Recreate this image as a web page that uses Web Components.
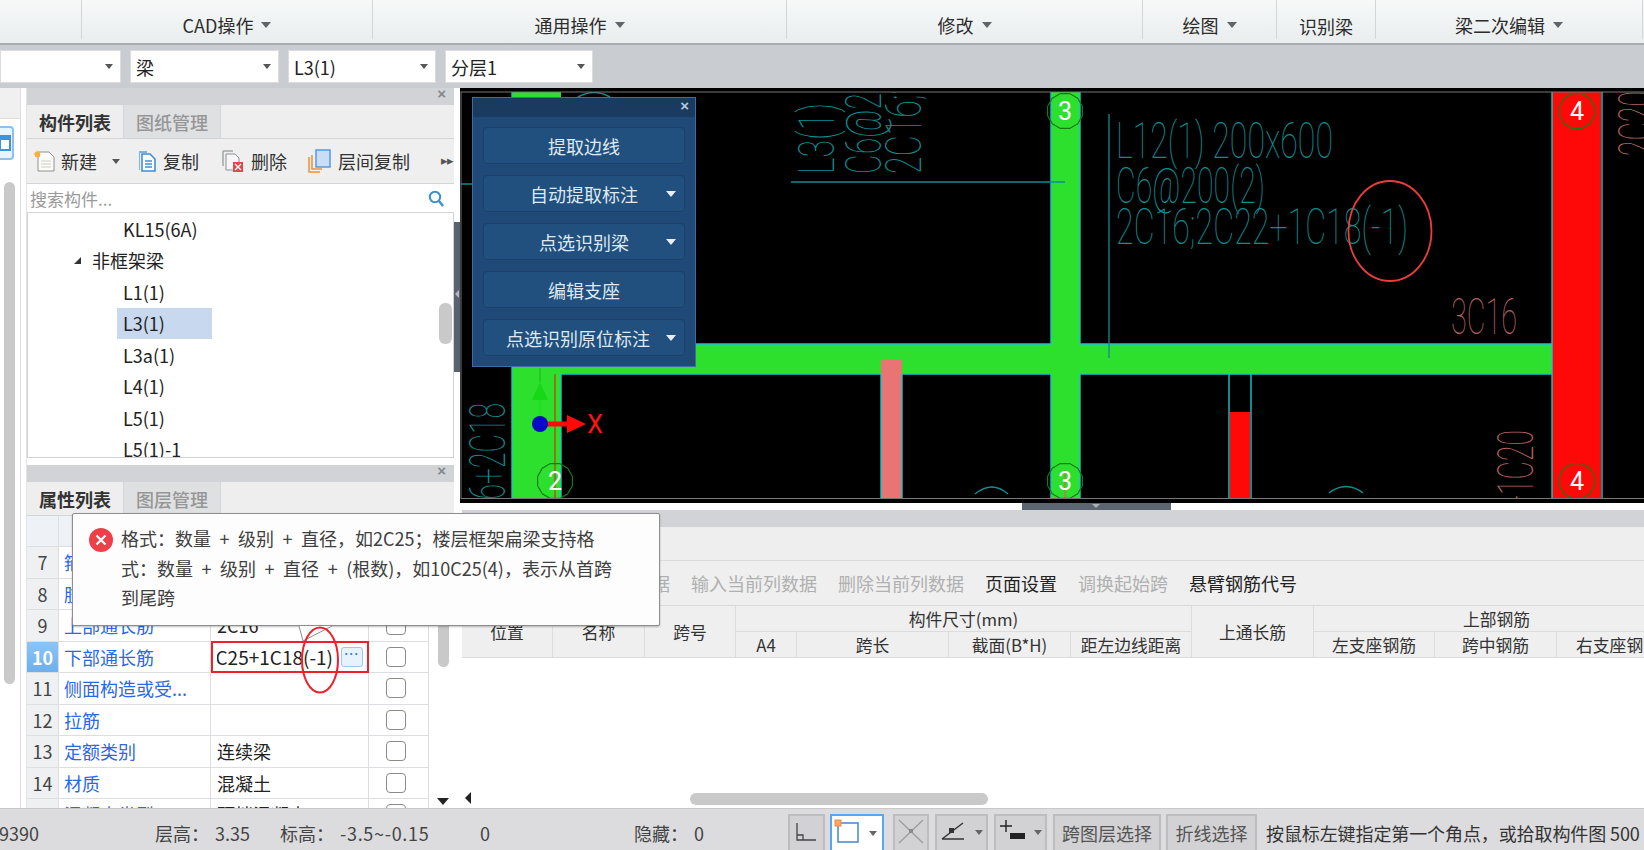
<!DOCTYPE html>
<html lang="zh">
<head>
<meta charset="utf-8">
<title>梁二次编辑</title>
<style>
  html, body { margin:0; height:100%; background:#fff; }
  body { font-family:"Noto Sans CJK SC","Noto Sans",sans-serif; font-size:18px; color:#333; overflow:hidden; }
</style>
</head>
<body>
<gl-app>
  <gl-ribbon>
    <gl-ribbon-group style="width:82px"></gl-ribbon-group>
    <gl-ribbon-group style="width:291px" arrow>CAD操作</gl-ribbon-group>
    <gl-ribbon-group style="width:414px" arrow>通用操作</gl-ribbon-group>
    <gl-ribbon-group style="width:356px" arrow>修改</gl-ribbon-group>
    <gl-ribbon-group style="width:134px" arrow>绘图</gl-ribbon-group>
    <gl-ribbon-group style="width:99px;--drop:2px">识别梁</gl-ribbon-group>
    <gl-ribbon-group style="width:267px" arrow>梁二次编辑</gl-ribbon-group>
  </gl-ribbon>

  <gl-select-bar>
    <gl-combo style="width:121px"></gl-combo>
    <gl-combo style="width:149px">梁</gl-combo>
    <gl-combo style="width:148px">L3(1)</gl-combo>
    <gl-combo style="width:148px">分层1</gl-combo>
  </gl-select-bar>

  <gl-workspace>
    <gl-side-strip></gl-side-strip>
    <gl-left-column>
      <gl-dock-panel style="height:370px" tab1="构件列表" tab2="图纸管理">
        <gl-list-tools></gl-list-tools>
        <gl-search-box></gl-search-box>
        <gl-tree>
          <gl-tree-row>KL15(6A)</gl-tree-row>
          <gl-tree-row group>非框架梁</gl-tree-row>
          <gl-tree-row>L1(1)</gl-tree-row>
          <gl-tree-row selected>L3(1)</gl-tree-row>
          <gl-tree-row>L3a(1)</gl-tree-row>
          <gl-tree-row>L4(1)</gl-tree-row>
          <gl-tree-row>L5(1)</gl-tree-row>
          <gl-tree-row>L5(1)-1</gl-tree-row>
        </gl-tree>
      </gl-dock-panel>
      <gl-dock-panel style="height:343px" tab1="属性列表" tab2="图层管理">
        <gl-prop-table>
          <gl-prop-row num="7" name="箍筋"></gl-prop-row>
          <gl-prop-row num="8" name="肢数"></gl-prop-row>
          <gl-prop-row num="9" name="上部通长筋" value="2C16"></gl-prop-row>
          <gl-prop-row num="10" name="下部通长筋" value="2C25+1C18(-1)" active></gl-prop-row>
          <gl-prop-row num="11" name="侧面构造或受..."></gl-prop-row>
          <gl-prop-row num="12" name="拉筋"></gl-prop-row>
          <gl-prop-row num="13" name="定额类别" value="连续梁"></gl-prop-row>
          <gl-prop-row num="14" name="材质" value="混凝土"></gl-prop-row>
          <gl-prop-row num="15" name="混凝土类型" value="预拌混凝土"></gl-prop-row>
        </gl-prop-table>
      </gl-dock-panel>
    </gl-left-column>
    <gl-gutter></gl-gutter>
    <gl-right-column>
      <gl-cad-canvas>
        <gl-float-panel>
          <gl-float-btn>提取边线</gl-float-btn>
          <gl-float-btn arrow>自动提取标注</gl-float-btn>
          <gl-float-btn arrow>点选识别梁</gl-float-btn>
          <gl-float-btn>编辑支座</gl-float-btn>
          <gl-float-btn arrow style="--pad-right:12px">点选识别原位标注</gl-float-btn>
        </gl-float-panel>
      </gl-cad-canvas>
      <gl-splitter></gl-splitter>
      <gl-span-panel></gl-span-panel>
    </gl-right-column>
  </gl-workspace>

  <gl-status-bar></gl-status-bar>

  <gl-error-tip>格式：数量 + 级别 + 直径，如2C25；楼层框架扁梁支持格<br>式：数量 + 级别 + 直径 + (根数)，如10C25(4)，表示从首跨<br>到尾跨</gl-error-tip>
  <gl-ring></gl-ring>
</gl-app>

<script>
/* small base class: sets the shadow root from the css() and html() of the subclass */
class GlElement extends HTMLElement {
  constructor() {
    super();
    this.attachShadow({ mode: "open" });
  }
  connectedCallback() {
    this.shadowRoot.innerHTML = `<style>${this.css()}</style>${this.html()}`;
  }
  css() { return ""; }
  html() { return "<slot></slot>"; }
}
const define = (name, cls) => customElements.define(name, cls);

define("gl-app", class extends GlElement {
  css() { return `:host { display:flex; flex-direction:column; position:relative; width:1644px; height:850px; overflow:hidden; }`; }
});

define("gl-ribbon", class extends GlElement {
  css() { return `:host { display:flex; height:43px; flex:none; background:linear-gradient(#f7f9f9,#e9eded); border-bottom:2px solid #a9abae; }`; }
});

define("gl-ribbon-group", class extends GlElement {
  css() {
    return `
      :host { display:block; flex:none; height:39px; box-sizing:border-box; border-right:1px solid #d2d6d6; font-size:18px; color:#2c2c2c; }
      .label { display:flex; align-items:center; justify-content:center; gap:8px; height:50px; padding-top:var(--drop,0); box-sizing:border-box; white-space:nowrap; }
      .arrow { width:0; height:0; border:5px solid transparent; border-top:6px solid #606468; border-bottom:0; }
    `;
  }
  html() {
    return `<div class="label"><slot></slot>${this.hasAttribute("arrow") ? '<i class="arrow"></i>' : ""}</div>`;
  }
});

define("gl-select-bar", class extends GlElement {
  css() { return `:host { display:flex; gap:9px; flex:none; height:43px; padding-top:5px; box-sizing:border-box; background:#c9ccd1; align-items:flex-start; }`; }
});

define("gl-combo", class extends GlElement {
  css() {
    return `
      :host { display:flex; align-items:center; flex:none; height:33px; box-sizing:border-box; padding-left:5px; background:#fff; border:1px solid #dcdcdc; position:relative; font-size:18px; color:#222; }
      .arrow { position:absolute; right:7px; top:13px; width:0; height:0; border:4px solid transparent; border-top:5px solid #555; border-bottom:0; }
    `;
  }
  html() { return `<slot></slot><i class="arrow"></i>`; }
});

define("gl-workspace", class extends GlElement {
  css() { return `:host { display:flex; flex:none; height:720px; background:#fff; }`; }
});

define("gl-side-strip", class extends GlElement {
  css() {
    return `
      :host { display:flex; flex-direction:column; flex:none; width:27px; box-sizing:border-box; border-right:1px solid #e4e4e4; position:relative; }
      .top { height:30px; width:20px; background:#f0f0f0; border-bottom:1px solid #ddd; }
      .btn { width:14px; height:34px; margin-top:7px; box-sizing:border-box; border:2px solid #8cc0f0; border-left:0; border-radius:0 4px 4px 0; background:#eaf4fd; display:flex; align-items:center; }
      .rail { position:absolute; left:20px; top:0; bottom:0; width:1px; background:#dedede; }
      .thumb { width:11px; height:502px; margin:22px 0 0 4px; background:#c9c9c9; border-radius:6px; }
    `;
  }
  html() {
    return `<div class="top"></div>
      <div class="btn"><svg width="12" height="16" viewBox="0 0 12 16"><rect x="0" y="1" width="10" height="14" fill="#fff" stroke="#3a94e0" stroke-width="2"/><rect x="0" y="1" width="10" height="4" fill="#3a94e0"/></svg></div>
      <div class="thumb"></div><div class="rail"></div>`;
  }
});

define("gl-left-column", class extends GlElement {
  css() { return `:host { display:flex; flex-direction:column; gap:7px; flex:none; width:427px; }`; }
});

define("gl-dock-panel", class extends GlElement {
  css() {
    return `
      :host { display:flex; flex-direction:column; flex:none; box-sizing:border-box; overflow:hidden; }
      .title { flex:none; height:17px; background:#d1d3d7; position:relative; }
      .close { position:absolute; right:8px; top:-5px; font:bold 15px/22px "Liberation Sans",sans-serif; color:#85888c; }
      .tabs { display:flex; flex:none; height:33px; background:#eeeeee; border-bottom:1px solid #d3d5d8; }
      .tab { width:97px; display:flex; align-items:center; justify-content:center; font-weight:700; font-size:18px; color:#333; border-right:1px solid #d3d5d8; box-sizing:border-box; }
      .tab.off { background:#dfe0e2; color:#969696; font-weight:500; }
      .body { flex:1; display:flex; flex-direction:column; min-height:0; }
    `;
  }
  html() {
    return `<div class="title"><span class="close">×</span></div>
      <div class="tabs"><div class="tab">${this.getAttribute("tab1")}</div><div class="tab off">${this.getAttribute("tab2")}</div></div>
      <div class="body"><slot></slot></div>`;
  }
});

define("gl-list-tools", class extends GlElement {
  css() {
    return `
      :host { display:flex; align-items:center; flex:none; height:45px; box-sizing:border-box; padding-left:6px; background:#efefef; border-bottom:1px solid #d3d5d8; font-size:18px; color:#333; position:relative; }
      .item { display:flex; align-items:center; gap:6px; flex:none; }
      .arrow { width:0; height:0; border:4px solid transparent; border-top:5px solid #555; border-bottom:0; margin-left:9px; }
      .more { position:absolute; left:414px; top:11px; color:#555; font-size:13px; letter-spacing:-1px; }
    `;
  }
  html() {
    return `
      <div class="item" style="width:104px">
        <svg width="22" height="22" viewBox="0 0 22 22"><path d="M5 2h11l5 5v14H5z" fill="#fbfbf8" stroke="#8f9490"/><path d="M8 11h10M8 14h10M8 17h10" stroke="#cfcfc8"/><path d="M4 0l1 3 3 1-3 1-1 3-1-3-3-1 3-1z" fill="#f4a030"/><rect x="2" y="2" width="5" height="5" fill="#f7b040"/></svg>
        新建<i class="arrow"></i>
      </div>
      <div class="item" style="width:85px">
        <svg width="20" height="22" viewBox="0 0 20 22"><path d="M2 1h8v2H3v17H2z" fill="#7fb2e4"/><path d="M5 4h8l5 5v12H5z" fill="#fff" stroke="#3f8ed8" stroke-width="1.6"/><path d="M8 11h7M8 14h7M8 17h7" stroke="#3f8ed8" stroke-width="1.4"/></svg>
        复制
      </div>
      <div class="item" style="width:86px;gap:7px">
        <svg width="22" height="22" viewBox="0 0 22 22"><path d="M1 1h10M1 1v15" stroke="#a3a6a8" stroke-width="1.5" fill="none"/><path d="M4 4h9l4 4v12H4z" fill="#f6f6f6" stroke="#8c8f91"/><rect x="11" y="12" width="10" height="10" fill="#e0454a"/><path d="M13 14l6 6M19 14l-6 6" stroke="#fff" stroke-width="1.4"/></svg>
        删除
      </div>
      <div class="item" style="gap:7px">
        <svg width="23" height="24" viewBox="0 0 23 24"><path d="M1 8v15h11M4 6v14h10" fill="none" stroke="#ef9440" stroke-width="1.6"/><rect x="8" y="1" width="14" height="17" fill="#c9def6" stroke="#4a96e0" stroke-width="1.4"/></svg>
        层间复制
      </div>
      <span class="more">▸▸</span>`;
  }
});

define("gl-search-box", class extends GlElement {
  css() {
    return `
      :host { display:flex; align-items:center; justify-content:space-between; flex:none; height:29px; box-sizing:border-box; padding:0 10px 0 3px; background:#fff; border-bottom:1px solid #d3d5d8; color:#9a9a9a; font-size:17px; }
    `;
  }
  html() {
    return `<span>搜索构件...</span>
      <svg width="16" height="17" viewBox="0 0 16 17"><circle cx="7" cy="7" r="5.2" fill="none" stroke="#3b90d4" stroke-width="2"/><path d="M11 11l4 5" stroke="#3b90d4" stroke-width="2.4"/></svg>`;
  }
});

define("gl-tree", class extends GlElement {
  css() {
    return `
      :host { display:block; flex:1; min-height:0; box-sizing:border-box; border:1px solid #cfd2d6; border-top:0; position:relative; overflow:hidden; background:#fff; }
      .thumb { position:absolute; left:411px; top:90px; width:13px; height:41px; background:#c9c9c9; border-radius:6px; }
    `;
  }
  html() { return `<slot></slot><div class="thumb"></div>`; }
});

define("gl-tree-row", class extends GlElement {
  css() {
    const group = this.hasAttribute("group");
    const selected = this.hasAttribute("selected");
    return `
      :host { display:flex; align-items:center; height:31.5px; position:relative; padding-left:${group ? 64 : 89}px; color:#222; }
      .text { ${group ? "" : "width:95px; padding-left:6px; box-sizing:border-box;"} height:100%; display:flex; align-items:center; font-size:18px; white-space:nowrap; ${selected ? "background:#c8d8ee;" : ""} }
      .fold { position:absolute; left:46px; top:12px; width:0; height:0; border-left:7px solid transparent; border-bottom:7px solid #333; }
    `;
  }
  html() {
    return `${this.hasAttribute("group") ? '<i class="fold"></i>' : ""}<div class="text"><slot></slot></div>`;
  }
});

define("gl-prop-table", class extends GlElement {
  css() {
    return `
      :host { display:block; flex:1; min-height:0; position:relative; overflow:hidden; background:#fff; }
      .head { display:grid; grid-template-columns:32px 152px 158px 60px; height:31px; background:#eef1f6; }
      .head div { border-right:1px solid #dcdee2; border-bottom:1px solid #dcdee2; }
      .rows { width:402px; }
      .thumb { position:absolute; left:411px; top:48px; width:11px; height:103px; border-radius:6px; background:#c9c9c9; }
      .down { position:absolute; left:410px; top:282px; width:0; height:0; border:6px solid transparent; border-top:7px solid #222; border-bottom:0; }
    `;
  }
  html() {
    return `<div class="head"><div></div><div></div><div></div><div></div></div>
      <div class="rows"><slot></slot></div>
      <div class="thumb"></div><i class="down"></i>`;
  }
});

define("gl-prop-row", class extends GlElement {
  css() {
    return `
      :host { display:grid; grid-template-columns:32px 152px 158px 60px; height:31.5px; font-size:18px; position:relative; }
      .cell { display:flex; align-items:center; box-sizing:border-box; border-right:1px solid #dcdee2; border-bottom:1px solid #dcdee2; white-space:nowrap; overflow:hidden; }
      .num { justify-content:center; background:#eef0f2; color:#444; }
      .num.on { background:linear-gradient(#8cc4f6,#6cb0ee); color:#fff; font-weight:700; }
      .name { padding-left:5px; color:#2a68e6; }
      .value { padding-left:6px; color:#222; }
      .box { width:20px; height:20px; margin-left:17px; box-sizing:border-box; border:1.5px solid #8a8a8a; border-radius:4px; background:#fff; }
      .check { padding:0; }
      .editor { position:absolute; left:184px; top:-1px; width:158px; height:32px; box-sizing:border-box; border:2px solid #f0202a; display:flex; align-items:center; background:#fff; }
      .clip { flex:none; width:116px; margin-left:4px; display:flex; justify-content:flex-end; overflow:hidden; white-space:nowrap; font-size:19px; color:#222; }
      .dots { flex:none; width:22px; height:20px; margin-left:8px; box-sizing:border-box; border:1.5px solid #9cc8f0; border-radius:3px; background:#e6f2fc; color:#2f7fd0; font:bold 12px/12px "Liberation Sans",sans-serif; text-align:center; letter-spacing:1px; }
    `;
  }
  html() {
    const active = this.hasAttribute("active");
    const value = this.getAttribute("value") || "";
    return `
      <div class="cell num ${active ? "on" : ""}">${this.getAttribute("num")}</div>
      <div class="cell name">${this.getAttribute("name")}</div>
      <div class="cell value">${active ? "" : value}</div>
      <div class="cell check"><div class="box"></div></div>
      ${active ? `<div class="editor"><div class="clip"><span style="flex:none">${value}</span></div><div class="dots">···</div></div>` : ""}`;
  }
});

define("gl-gutter", class extends GlElement {
  css() {
    return `
      :host { display:block; flex:none; width:6px; background:#fff; position:relative; }
      .grip { margin-top:134px; height:150px; background:#586270; position:relative; }
      .grip i { position:absolute; left:1px; top:68px; width:0; height:0; border:4px solid transparent; border-right:4px solid #b5bac0; border-left:0; }
    `;
  }
  html() { return `<div class="grip"><i></i></div>`; }
});

define("gl-right-column", class extends GlElement {
  css() { return `:host { display:flex; flex-direction:column; flex:none; width:1184px; }`; }
});

/* CAD drawing: free canvas, everything is placed by its drawing coordinates */
const TEAL = "#0f8c90", SALMON = "#b5625e";
function stickText(text, x, y, len, cap, color, rotated) {
  const size = (cap / 0.711).toFixed(1);
  const tf = rotated ? `transform="translate(${x} ${y}) rotate(-90)"` : `x="${x}" y="${y}"`;
  return `<text ${tf} textLength="${len}" lengthAdjust="spacingAndGlyphs" font-family="Roboto" font-weight="100" font-size="${size}" fill="${color}">${text}</text>`;
}
function marker(label, cx, cy) {
  const pts = [];
  for (let i = 0; i < 12; i++) {
    const a = (i + 0.5) * Math.PI / 6;
    pts.push(`${(cx + 18 * Math.cos(a)).toFixed(1)},${(cy + 18 * Math.sin(a)).toFixed(1)}`);
  }
  return `<polygon points="${pts.join(" ")}" fill="none" stroke="#157a15" stroke-width="1.2"/>
    <text x="${cx}" y="${cy + 9}" text-anchor="middle" font-family="Roboto" font-size="25" fill="#fff">${label}</text>`;
}

define("gl-cad-canvas", class extends GlElement {
  css() {
    return `
      :host { display:block; flex:none; height:415px; background:#000; position:relative; overflow:hidden; }
      svg { display:block; }
    `;
  }
  html() {
    return `
    <svg width="1184" height="415" viewBox="460 88 1184 415">
      <defs><clipPath id="frame"><rect x="461" y="92" width="1183" height="406"/></clipPath></defs>
      <g clip-path="url(#frame)">
        <rect x="512" y="92" width="49" height="406" fill="#2de02d"/>
        <rect x="561" y="344" width="991" height="30" fill="#2de02d"/>
        <rect x="1051" y="92" width="29" height="406" fill="#2de02d"/>
        <rect x="1552" y="92" width="49" height="406" fill="#ff0808"/>
        <rect x="881" y="359" width="21" height="139" fill="#e87474"/>
        <rect x="1230" y="412" width="20" height="86" fill="#ff0808"/>
        <g stroke="#19c6c6" stroke-width="1.4" fill="none">
          <path d="M561 344H1051M1080 344H1552M561 374H881M902 374H1051M1080 374H1552"/>
          <path d="M512 92V498M561 374V498M1051 92V344M1080 92V344M1051 374V498M1080 374V498"/>
          <path d="M1552 92V498M1602 92V498M881 374V498M902 374V498M1229 374V498M1251 374V498"/>
        </g>
        <path d="M791 182H1065M1109 114V358M460 184H472" stroke="${TEAL}" stroke-width="1.3" fill="none"/>
        <path d="M975 494Q992 480 1008 494M1329 493Q1346 480 1363 493M578 97Q594 88 610 97" stroke="${TEAL}" stroke-width="1.5" fill="none"/>
        ${stickText("L12(1) 200x600", 1116, 158, 217, 36, TEAL)}
        ${stickText("C6@200(2)", 1116, 203, 149, 35, TEAL)}
        ${stickText("2C16;2C22+1C18(-1)", 1116, 244, 292, 35, TEAL)}
        ${stickText("3C16", 1451, 334, 66, 36, SALMON)}
        ${stickText("L3(1)", 834, 174, 71, 35, TEAL, true)}
        ${stickText("C6@200(2)", 881, 174, 149, 35, TEAL, true)}
        ${stickText("2C16;2C22+1C18(-1)", 921, 174, 292, 35, TEAL, true)}
        ${stickText("2C16+2C18", 505, 549, 146, 36, TEAL, true)}
        ${stickText("+1C20", 1533, 511, 81, 36, SALMON, true)}
        ${stickText("2C20", 1654, 156, 65, 36, SALMON, true)}
        <path d="M555 374V498" stroke="#c2401c" stroke-width="1.3"/>
        <path d="M1065 470V498" stroke="#c27a2a" stroke-width="1.3"/>
        ${marker("2", 555, 481)}
        ${marker("3", 1065, 111)}
        ${marker("3", 1065, 481)}
        ${marker("4", 1577, 111)}
        ${marker("4", 1577, 481)}
        <path d="M540 424V398" stroke="#1fe01f" stroke-width="3"/>
        <path d="M540 382L532 400H548Z" fill="#16d816"/>
        <path d="M540 368V382" stroke="#1bb81b" stroke-width="1"/>
        <path d="M540 424H568" stroke="#ff0a0a" stroke-width="5"/>
        <path d="M567 415L586 424L567 433Z" fill="#ff0a0a"/>
        <circle cx="540" cy="424" r="8" fill="#0808c8"/>
        <text x="595" y="433" text-anchor="middle" font-family="Roboto" font-size="25" fill="#ff1414">X</text>
        <ellipse cx="1390" cy="231" rx="41.5" ry="50" fill="none" stroke="#ee3b3b" stroke-width="1.8"/>
      </g>
      <rect x="461" y="92" width="1190" height="406.5" fill="none" stroke="#777" stroke-width="1"/>
    </svg>
    <slot></slot>`;
  }
});

define("gl-float-panel", class extends GlElement {
  css() {
    return `
      :host { display:block; position:absolute; left:12px; top:9px; width:224px; height:270px; box-sizing:border-box; background:#1f4a78; border:1px solid #3d6ea3; color:#dfe8f0; }
      .bar { height:19px; background:#1a3a5f; position:relative; }
      .bar span { position:absolute; right:6px; top:-3px; font:bold 15px/22px "Liberation Sans",sans-serif; color:#b4c8dc; }
      .list { display:flex; flex-direction:column; gap:11px; padding:10px 10px 0; }
    `;
  }
  html() { return `<div class="bar"><span>×</span></div><div class="list"><slot></slot></div>`; }
});

define("gl-float-btn", class extends GlElement {
  css() {
    return `
      :host { display:flex; align-items:center; justify-content:center; height:37px; box-sizing:border-box; padding-right:var(--pad-right,0); background:#21507f; border:1px solid #1b416a; border-radius:4px; position:relative; font-size:18px; }
      .arrow { position:absolute; right:8px; top:15px; width:0; height:0; border:5px solid transparent; border-top:6px solid #e8eef4; border-bottom:0; }
    `;
  }
  html() { return `<slot></slot>${this.hasAttribute("arrow") ? '<i class="arrow"></i>' : ""}`; }
});

define("gl-splitter", class extends GlElement {
  css() {
    return `
      :host { display:block; flex:none; height:7px; background:#fff; position:relative; }
      .grip { position:absolute; left:562px; top:0; width:149px; height:7px; background:#5c6672; }
      .grip i { position:absolute; left:70px; top:1px; width:0; height:0; border:4px solid transparent; border-top:4px solid #aab0b8; border-bottom:0; }
    `;
  }
  html() { return `<div class="grip"><i></i></div>`; }
});

define("gl-span-panel", class extends GlElement {
  css() {
    return `
      :host { display:flex; flex-direction:column; flex:1; min-height:0; margin-left:2px; position:relative; overflow:hidden; background:#fff; font-size:16.5px; }
      .title { flex:none; height:17px; background:#d1d3d7; }
      .strip { flex:none; height:33px; background:#eeeeee; }
      .tools { flex:none; height:46px; box-sizing:border-box; padding-left:82px; display:flex; align-items:center; gap:21px; background:#efefef; border-top:1px solid #dadada; border-bottom:1px solid #dadada; white-space:nowrap; font-size:18px; }
      .off { color:#b0b0b0; }
      .on { color:#222; }
      .table { flex:none; display:grid; grid-template-columns:91px 92px 91px 61px 152px 122px 121px 122px 121px 122px 123px; grid-template-rows:26px 26px; background:#efefef; color:#333; }
      .table div { display:flex; align-items:center; justify-content:center; white-space:nowrap; box-sizing:border-box; border-right:1px solid #dcdcdc; border-bottom:1px solid #dcdcdc; font-size:16.8px; }
      .span2 { grid-row:span 2; }
      .thumb { position:absolute; left:228px; top:283px; width:298px; height:12px; border-radius:6px; background:#c9c9c9; }
      .left { position:absolute; left:3px; top:282px; width:0; height:0; border:6px solid transparent; border-right:6px solid #222; border-left:0; }
    `;
  }
  html() {
    return `
      <div class="title"></div><div class="strip"></div>
      <div class="tools">
        <span class="off">删除当前行数据</span><span class="off">输入当前列数据</span><span class="off">删除当前列数据</span>
        <span class="on">页面设置</span><span class="off">调换起始跨</span><span class="on">悬臂钢筋代号</span>
      </div>
      <div class="table">
        <div class="span2">位置</div><div class="span2">名称</div><div class="span2">跨号</div>
        <div style="grid-column:span 4">构件尺寸(mm)</div>
        <div class="span2">上通长筋</div>
        <div style="grid-column:span 3">上部钢筋</div>
        <div>A4</div><div>跨长</div><div>截面(B*H)</div><div>距左边线距离</div>
        <div>左支座钢筋</div><div>跨中钢筋</div><div>右支座钢筋</div>
      </div>
      <i class="left"></i><div class="thumb"></div>`;
  }
});

define("gl-status-bar", class extends GlElement {
  css() {
    return `
      :host { display:flex; flex:none; height:42px; box-sizing:border-box; background:#dcdcde; border-top:1px solid #c8c8c8; color:#444; font-size:18px; align-items:stretch; white-space:nowrap; overflow:hidden; }
      .info { display:flex; align-items:center; gap:6px; flex:none; padding-top:6px; box-sizing:border-box; }
      .wide { letter-spacing:.7px; }
      .btn { flex:none; height:36px; margin-top:5px; box-sizing:border-box; border:2px solid #bdbdbf; border-bottom:0; background:#d2d2d4; display:flex; align-items:center; justify-content:center; color:#555; font-size:18px; }
      .btn.sel { background:#fff; border-color:#56a6f2; }
      .hint { flex:none; display:flex; align-items:center; margin-left:9px; padding-top:6px; color:#333; letter-spacing:-.1px; }
      svg { display:block; }
    `;
  }
  html() {
    const arrow = (x, y) => `<path d="M${x - 4} ${y}h8l-4 5z" fill="#666"/>`;
    return `
      <div class="info" style="width:156px;margin-left:-1px">9390</div>
      <div class="info" style="width:125px">层高：<span>3.35</span></div>
      <div class="info" style="width:200px">标高：<span class="wide">-3.5~-0.15</span></div>
      <div class="info" style="width:154px">0</div>
      <div class="info" style="width:154px">隐藏：<span>0</span></div>
      <div class="btn" style="width:37px"><svg width="33" height="32" viewBox="0 0 33 32"><path d="M7 6V23H26M7 18H13V23" fill="none" stroke="#444" stroke-width="1.3"/></svg></div>
      <div class="btn sel" style="width:54px;margin-left:5px"><svg width="50" height="32" viewBox="0 0 50 32"><rect x="6" y="6" width="20" height="19" fill="none" stroke="#4a90d9" stroke-width="1.6"/><rect x="3" y="3" width="6" height="6" fill="#f5a868" stroke="#ee8a3c"/>${arrow(41, 14)}</svg></div>
      <div class="btn" style="width:36px;margin-left:9px"><svg width="32" height="32" viewBox="0 0 32 32"><path d="M4 3L28 26M28 3L4 26" stroke="#9a9a9a" stroke-width="1.2"/><rect x="14" y="12" width="4" height="4" fill="#8a8a8a"/></svg></div>
      <div class="btn" style="width:53px;margin-left:6px"><svg width="49" height="32" viewBox="0 0 49 32"><path d="M5 22L26 6M5 22H27" fill="none" stroke="#333" stroke-width="1.4"/><rect x="12" y="11" width="5" height="5" fill="#333"/>${arrow(42, 13)}</svg></div>
      <div class="btn" style="width:53px;margin-left:6px"><svg width="49" height="32" viewBox="0 0 49 32"><path d="M4 9H16M10 3V15" stroke="#222" stroke-width="1.4"/><rect x="14" y="16" width="15" height="6" fill="#222"/>${arrow(42, 13)}</svg></div>
      <div class="btn" style="width:108px;margin-left:6px">跨图层选择</div>
      <div class="btn" style="width:91px;margin-left:5px">折线选择</div>
      <div class="hint">按鼠标左键指定第一个角点，或拾取构件图 500</div>`;
  }
});

define("gl-error-tip", class extends GlElement {
  css() {
    return `
      :host { display:flex; position:absolute; left:72px; top:513px; width:588px; height:113px; box-sizing:border-box; padding:10px 0 0 16px; gap:8px; background:#fdfdfd; border:1px solid #8e8e8e; border-radius:2px; box-shadow:0 1px 2px rgba(0,0,0,.25); color:#404040; font-size:18px; line-height:29.7px; word-spacing:4.5px; white-space:nowrap; }
      .icon { flex:none; margin-top:4px; }
      .tail { position:absolute; left:225px; top:111px; }
    `;
  }
  html() {
    return `<svg class="icon" width="24" height="24" viewBox="0 0 24 24"><circle cx="12" cy="12" r="12" fill="#ee4048"/><path d="M7.5 7.5l9 9M16.5 7.5l-9 9" stroke="#fff" stroke-width="2.2"/></svg>
      <div><slot></slot></div>
      <svg class="tail" width="36" height="18" viewBox="0 0 36 18"><path d="M1 1L5 16L34 1Z" fill="#fdfdfd"/><path d="M1 1L5 16L34 1" fill="none" stroke="#8e8e8e"/></svg>`;
  }
});

define("gl-ring", class extends GlElement {
  css() { return `:host { display:block; position:absolute; left:300px; top:626px; width:40px; height:68px; pointer-events:none; }`; }
  html() { return `<svg width="40" height="68" viewBox="0 0 40 68"><ellipse cx="20" cy="34" rx="18" ry="32.5" fill="none" stroke="#f0202a" stroke-width="2"/></svg>`; }
});
</script>
</body>
</html>
